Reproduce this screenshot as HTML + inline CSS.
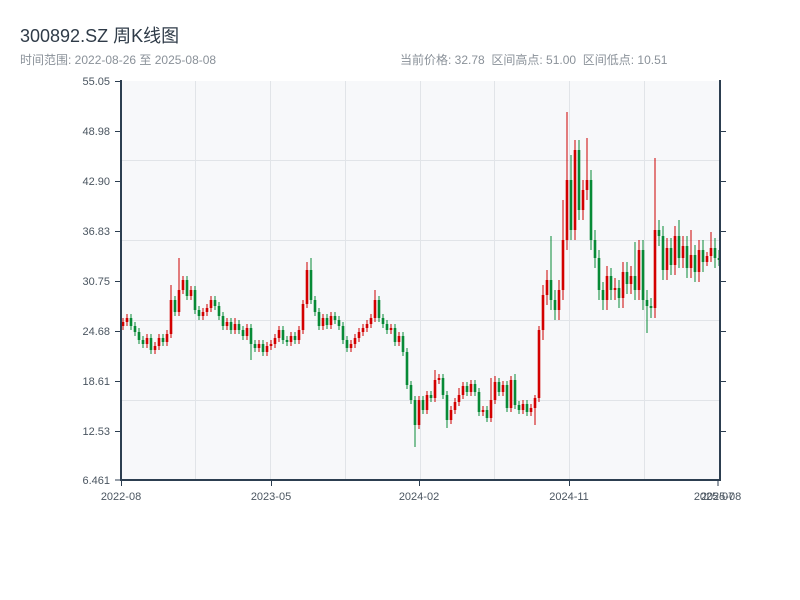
<!DOCTYPE html>
<html><head><meta charset="utf-8"><style>
body{margin:0;width:800px;height:600px;background:#fff;overflow:hidden;font-family:"Liberation Sans","Noto Sans CJK SC",sans-serif;}
.t{position:absolute;left:20px;top:22px;font-size:18px;color:#2f3b48;}
.s{position:absolute;top:51px;font-size:12px;color:#8a9199;}
</style></head><body>
<div class="t">300892.SZ 周K线图</div>
<div class="s" style="left:20px">时间范围: 2022-08-26 至 2025-08-08</div>
<div class="s" style="left:400px">当前价格: 32.78 &nbsp;区间高点: 51.00 &nbsp;区间低点: 10.51</div>
<svg width="800" height="600" style="position:absolute;left:0;top:0" font-family="Liberation Sans, sans-serif" font-size="11">
<rect x="121" y="81" width="599" height="399" fill="#f7f8fa"/>
<g stroke="#e1e4e8" stroke-width="1">
<line x1="195.5" y1="81" x2="195.5" y2="480"/><line x1="270.5" y1="81" x2="270.5" y2="480"/><line x1="345.5" y1="81" x2="345.5" y2="480"/><line x1="420.5" y1="81" x2="420.5" y2="480"/><line x1="494.5" y1="81" x2="494.5" y2="480"/><line x1="569.5" y1="81" x2="569.5" y2="480"/><line x1="644.5" y1="81" x2="644.5" y2="480"/>
<line x1="121" y1="160.5" x2="720" y2="160.5"/><line x1="121" y1="240.5" x2="720" y2="240.5"/><line x1="121" y1="320.5" x2="720" y2="320.5"/><line x1="121" y1="400.5" x2="720" y2="400.5"/>
</g>
<g fill="none">
<path stroke="#cc0000" stroke-width="1" d="M123 318V330M127 314V326M147 334V348M155 342V354M159 334V350M167 330V346M171 285V338M179 258V316M183 276V294M191 286V300M203 308V320M207 304V316M211 296V312M227 318V330M235 318V334M247 324V340M259 340V352M267 342V356M271 340V350M275 334V348M279 326V342M291 332V346M299 326V344M303 300V334M307 262V308M323 314V330M331 312V329M351 340V352M355 334V348M359 328V342M363 324V336M367 320V332M371 314V328M375 290V322M391 324V334M399 332V346M419 396V429M427 391V414M435 370V402M439 374V384M451 406V424M455 398V414M459 388V406M463 382V399M471 380V396M483 406V416M491 378V422M495 376V404M503 381V396M511 376V412M523 400V414M531 404V416M535 395V425M539 326V402M543 285V340M547 270V305M559 280V320M563 200V300M567 112V250M575 140V240M583 180V220M587 138V200M607 266V310M615 278V300M623 262V308M631 266V294M639 240V300M655 158V318M667 238V280M675 226V275M683 236V268M691 230V278M699 240V282M707 252V266M711 232V262"/>
<path stroke="#d30000" stroke-width="2.6" d="M123 322V326M127 318V322M147 338V344M155 346V350M159 338V346M167 334V342M171 300V334M179 290V312M183 280V290M191 290V296M203 312V316M207 308V312M211 300V308M227 322V326M235 324V330M247 328V336M259 344V348M267 346V352M271 344V346M275 338V344M279 330V338M291 336V342M299 330V340M303 304V330M307 270V304M323 318V326M331 316V325M351 344V348M355 338V344M359 332V338M363 328V332M367 324V328M371 318V324M375 300V318M391 328V330M399 336V342M419 400V425M427 395V410M435 380V398M439 378V380M451 410V420M455 402V410M459 395V402M463 386V395M471 384V392M483 410V412M491 400V418M495 382V400M503 385V392M511 380V408M523 404V410M531 408V412M535 398V408M539 330V398M543 295V330M547 280V295M559 290V310M563 240V290M567 180V240M575 150V230M583 190V210M587 180V190M607 276V300M615 288V290M623 272V298M631 276V284M639 250V290M655 230V308M667 248V270M675 236V265M683 246V258M691 255V268M699 250V272M707 256V262M711 248V256"/>
<path stroke="#078a36" stroke-width="1" d="M131 314V330M135 322V336M139 328V344M143 336V348M151 334V354M163 334V346M175 296V316M187 276V300M195 286V314M199 306V320M215 296V310M219 302V320M223 312V330M231 318V334M239 320V334M243 326V340M251 324V360M255 340V352M263 340V356M283 326V344M287 336V346M295 332V344M311 258V304M315 296V316M319 308V330M327 314V329M335 312V324M339 316V330M343 322V344M347 336V352M379 296V322M383 314V328M387 320V334M395 324V346M403 332V356M407 348V389M411 381V404M415 396V447M423 396V414M431 391V402M443 374V399M447 391V428M467 382V396M475 380V396M479 388V416M487 406V422M499 378V396M507 381V412M515 374V409M519 401V414M527 400V416M551 236V310M555 290V320M571 155V240M579 140V220M591 170V250M595 230V268M599 250V300M603 282V310M611 268V300M619 280V308M627 262V294M635 242V300M643 240V310M647 290V333M651 298V318M659 220V246M663 226V280M671 238V275M679 220V268M687 236V278M695 245V282M703 240V272M715 238V268M719 250V266"/>
<path stroke="#078a36" stroke-width="2.6" d="M131 318V326M135 326V332M139 332V340M143 340V344M151 338V350M163 338V342M175 300V312M187 280V296M195 290V310M199 310V316M215 300V306M219 306V316M223 316V326M231 322V330M239 324V330M243 330V336M251 328V344M255 344V348M263 344V352M283 330V340M287 340V342M295 336V340M311 270V300M315 300V312M319 312V326M327 318V325M335 316V320M339 320V326M343 326V340M347 340V348M379 300V318M383 318V324M387 324V330M395 328V342M403 336V352M407 352V385M411 385V400M415 400V425M423 400V410M431 395V398M443 378V395M447 395V420M467 386V392M475 384V392M479 392V412M487 410V418M499 382V392M507 385V408M515 380V405M519 405V410M527 404V412M551 280V300M555 300V310M571 180V230M579 150V210M591 180V240M595 240V258M599 258V290M603 290V300M611 276V290M619 288V298M627 272V284M635 276V290M643 250V300M647 300V306M651 306V308M659 230V236M663 236V270M671 248V265M679 236V258M687 246V268M695 255V272M703 250V262M715 248V258M719 258V260"/>
</g>
<g stroke="#2c3e50" stroke-width="2" fill="none">
<line x1="121" y1="80" x2="121" y2="481"/><line x1="120" y1="480" x2="721" y2="480"/><line x1="720" y1="80" x2="720" y2="481"/>
</g>
<g stroke="#2c3e50" stroke-width="1">
<line x1="115" y1="81.5" x2="121" y2="81.5"/><line x1="115" y1="131.5" x2="121" y2="131.5"/><line x1="115" y1="181.5" x2="121" y2="181.5"/><line x1="115" y1="231.5" x2="121" y2="231.5"/><line x1="115" y1="281.5" x2="121" y2="281.5"/><line x1="115" y1="331.5" x2="121" y2="331.5"/><line x1="115" y1="381.5" x2="121" y2="381.5"/><line x1="115" y1="431.5" x2="121" y2="431.5"/><line x1="115" y1="480" x2="121" y2="480"/>
<line x1="720" y1="131.5" x2="726" y2="131.5"/><line x1="720" y1="181.5" x2="726" y2="181.5"/><line x1="720" y1="231.5" x2="726" y2="231.5"/><line x1="720" y1="281.5" x2="726" y2="281.5"/><line x1="720" y1="331.5" x2="726" y2="331.5"/><line x1="720" y1="381.5" x2="726" y2="381.5"/><line x1="720" y1="431.5" x2="726" y2="431.5"/>
<line x1="121.5" y1="480" x2="121.5" y2="486"/><line x1="271.5" y1="480" x2="271.5" y2="486"/><line x1="419.5" y1="480" x2="419.5" y2="486"/><line x1="569.5" y1="480" x2="569.5" y2="486"/><line x1="718" y1="480" x2="718" y2="486"/>
</g>
<g fill="#4a5560" text-anchor="end">
<text x="110" y="85">55.05</text><text x="110" y="135">48.98</text><text x="110" y="185">42.90</text><text x="110" y="235">36.83</text><text x="110" y="285">30.75</text><text x="110" y="335">24.68</text><text x="110" y="385">18.61</text><text x="110" y="435">12.53</text><text x="110" y="484">6.461</text>
</g>
<g fill="#4a5560" text-anchor="middle">
<text x="121" y="500">2022-08</text><text x="271" y="500">2023-05</text><text x="419" y="500">2024-02</text><text x="569" y="500">2024-11</text><text x="714" y="500">2025-07</text><text x="721" y="500">2025-08</text>
</g>
</svg>
</body></html>
